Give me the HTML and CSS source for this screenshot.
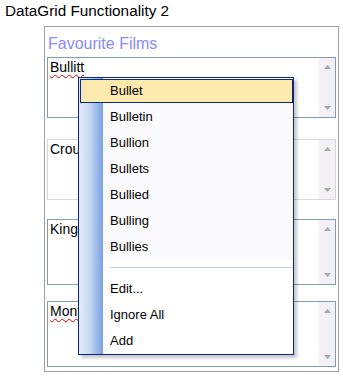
FILE: index.html
```html
<!DOCTYPE html>
<html lang="en">
<head>
  <meta charset="UTF-8" />
  <title>DataGrid Functionality 2</title>
  <link rel="stylesheet" href="styles.css">
</head>
<body>
  <h1 class="page-title">DataGrid Functionality 2</h1>

  <div class="panel">
    <div class="panel-title">Favourite Films</div>

    <div class="films">
      <div class="film-box focus">
        <div class="film-text"><span class="misspelt">Bullitt</span></div>
        <div class="scroll">
          <svg width="7" height="4" viewBox="0 0 7 4"><path d="M0 4 L3.5 0 L7 4 Z" fill="#a7a5ab"/></svg>
          <svg width="7" height="4" viewBox="0 0 7 4"><path d="M0 0 L7 0 L3.5 4 Z" fill="#a7a5ab"/></svg>
        </div>
      </div>

      <div class="film-box idle">
        <div class="film-text">Crouching Tiger, Hidden Dragon</div>
        <div class="scroll">
          <svg width="7" height="4" viewBox="0 0 7 4"><path d="M0 4 L3.5 0 L7 4 Z" fill="#a7a5ab"/></svg>
          <svg width="7" height="4" viewBox="0 0 7 4"><path d="M0 0 L7 0 L3.5 4 Z" fill="#a7a5ab"/></svg>
        </div>
      </div>

      <div class="film-box tall">
        <div class="film-text">Kingdom of Heaven</div>
        <div class="scroll">
          <svg width="7" height="4" viewBox="0 0 7 4"><path d="M0 4 L3.5 0 L7 4 Z" fill="#a7a5ab"/></svg>
          <svg width="7" height="4" viewBox="0 0 7 4"><path d="M0 0 L7 0 L3.5 4 Z" fill="#a7a5ab"/></svg>
        </div>
      </div>

      <div class="film-box tall last">
        <div class="film-text"><span class="misspelt">Monty</span> Python</div>
        <div class="scroll">
          <svg width="7" height="4" viewBox="0 0 7 4"><path d="M0 4 L3.5 0 L7 4 Z" fill="#a7a5ab"/></svg>
          <svg width="7" height="4" viewBox="0 0 7 4"><path d="M0 0 L7 0 L3.5 4 Z" fill="#a7a5ab"/></svg>
        </div>
      </div>
    </div>
  </div>

  <!-- spelling suggestions for the focused cell -->
  <ul class="spell-menu">
    <li class="item active">Bullet</li>
    <li class="item">Bulletin</li>
    <li class="item">Bullion</li>
    <li class="item">Bullets</li>
    <li class="item">Bullied</li>
    <li class="item">Bulling</li>
    <li class="item">Bullies</li>
    <li class="separator"></li>
    <li class="item plain">Edit...</li>
    <li class="item plain">Ignore All</li>
    <li class="item plain">Add</li>
  </ul>
</body>
</html>
```

FILE: styles.css
```css
body {
  margin: 0;
  font-family: "Liberation Sans", Arial, sans-serif;
  color: #000;
  background: #fff;
}

.page-title {
  margin: 0 0 6px 0;
  padding: 2px 0 0 5px;
  font-size: 15.3px;
  font-weight: normal;
  line-height: 18px;
}

.panel {
  box-sizing: border-box;
  margin-left: 44px;
  width: 295px;
  height: 346px;
  border: 1px solid #a0a0a0;
  padding: 7px 0 0 0;
}

.panel-title {
  padding-left: 3px;
  font-size: 16px;
  line-height: 19px;
  color: #8a8aff;
}

.films {
  display: flex;
  flex-direction: column;
  margin: 4px 0 0 2px;
}

.film-box {
  box-sizing: border-box;
  display: flex;
  width: 289px;
  height: 61px;
  margin-top: 19px;
  border: 1px solid #7f9db9;
  background: #fff;
}

.film-box.focus {
  margin-top: 0;
}

.film-box.idle {
  margin-top: 21px;
  border-color: #d6d6dc;
}

.film-box.tall {
  height: 66px;
}

.film-box.last {
  margin-top: 16px;
}

.film-text {
  flex: 1;
  padding: 1px 2px;
  font-size: 14px;
  line-height: 17px;
  white-space: nowrap;
  overflow: hidden;
}

.misspelt {
  text-decoration: underline wavy #e00000;
  text-decoration-thickness: 1px;
  text-underline-offset: 2px;
}

.scroll {
  box-sizing: border-box;
  width: 17px;
  display: flex;
  flex-direction: column;
  justify-content: space-between;
  align-items: center;
  padding: 7px 0 7px 0;
  background: #f3f1f5;
  border-left: 1px solid #fbfafc;
}

.spell-menu {
  position: absolute;
  left: 78px;
  top: 77px;
  box-sizing: border-box;
  width: 216px;
  height: 278px;
  margin: 0;
  padding: 0;
  list-style: none;
  border: 1px solid #0a2784;
  background:
    linear-gradient(to right, #e4edfb 0%, #c6d8f5 45%, #7aa0e2 100%) 0 0 / 24px 100% no-repeat,
    #fbfafc;
  box-shadow: 3px 3px 3px rgba(0, 0, 0, 0.22);
  font-size: 13px;
}

.item {
  box-sizing: border-box;
  height: 26px;
  line-height: 26px;
  padding-left: 31px;
}

.item.active {
  margin: 1px 0 1px 1px;
  height: 24px;
  line-height: 22px;
  padding-left: 29px;
  border: 1px solid #0a2784;
  background: #fce9ae;
}

.item.plain {
  background: linear-gradient(#fff, #fff) 24px 0 / 100% 100% no-repeat;
}

.separator {
  height: 16px;
  background:
    linear-gradient(#c6d1e3, #c6d1e3) 31px 7px / 100% 1px no-repeat,
    linear-gradient(#fff, #fff) 24px 0 / 100% 100% no-repeat;
}
```
